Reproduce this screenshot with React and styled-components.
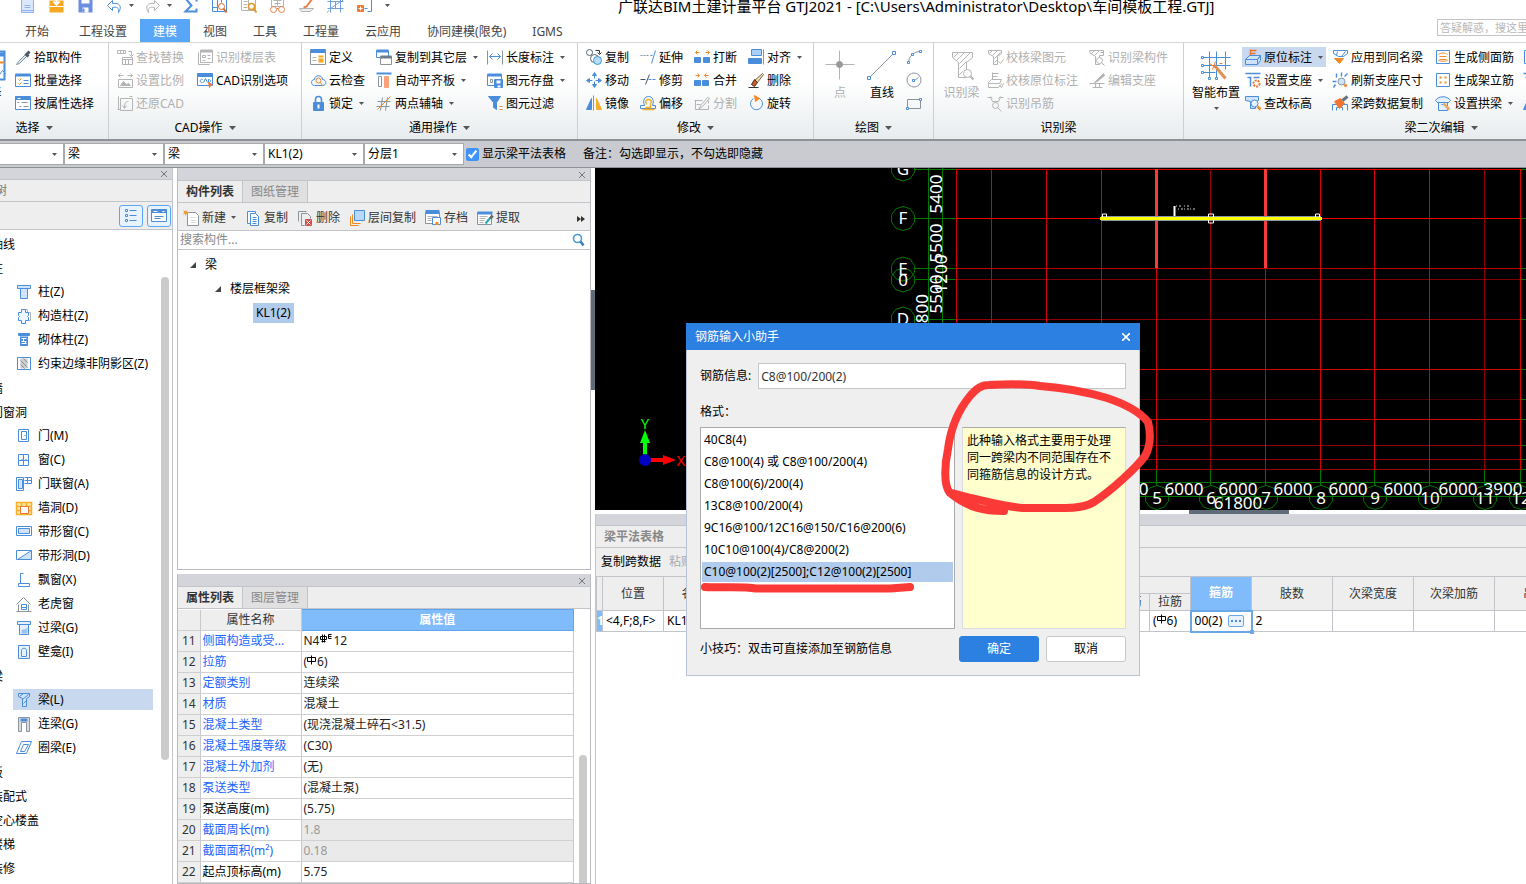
import { useState } from 'react'
import styled, { createGlobalStyle } from 'styled-components'

const B = '#4a8edb'
const L = '#cfe3fa'
const O = '#f08a24'
const G = '#8a949e'
const D = '#b4b4b4'

// 16 x 16 icons, stroke is inherited from the svg unless a shape sets its own
const icons = {
  doc: <><path d='M2 0h9l3 3v12H2z' fill='#dbe7fb' stroke='#8fb1ee' /><path d='M5 8h6M5 10h6M2 13h12' stroke='#8fb1ee' /></>,
  open: <><path d='M1 3h14v12H1z' fill='#f7a823' stroke='none' /><path d='M8 1v6M5 4l3 3 3-3' stroke='#fff' strokeWidth='2' /><path d='M1 9h14' stroke='#fff' /></>,
  save: <><path d='M1 1h14v14H1z' fill='#6a8fe0' stroke='none' /><path d='M5 10h6v5H5zM4 1h8v5H4z' fill='#fff' stroke='none' /><path d='M6 11v4' stroke='#6a8fe0' strokeWidth='2' /></>,
  undo: <path d='M6 3L1 8l5 5v-3c4-1 7 0 6 5 4-6 1-10-6-9z' fill='#fff' stroke={B} />,
  redo: <path d='M10 3l5 5-5 5v-3c-4-1-7 0-6 5-4-6-1-10 6-9z' fill='#fff' stroke={D} />,
  sum: <path d='M14 4V1H3l6 7-6 6h11v-3' stroke={B} strokeWidth='2' />,
  gridFind: <><path d='M1 1h14v13H1zM1 10h5v4M6 1v9M10 1v4' fill='#fff' stroke={B} /><circle cx='10' cy='9' r='3' fill='#fff' stroke='#e0662a' /><path d='M12 11l3 4' stroke='#e0662a' strokeWidth='2' /></>,
  sheetFind: <><path d='M1 0h14v13H1zM3 4h4M3 7h4M3 10h4M8 0v13' fill='#fff' stroke={D} /><circle cx='11' cy='9' r='3' fill='#fff' stroke='#e09a2a' strokeWidth='1.5' /><path d='M13 11l3 4' stroke='#e09a2a' strokeWidth='2' /></>,
  glasses: <><path d='M2 0h12v9H2zM4 3h8M8 0v8M5 6h6' stroke={D} /><circle cx='4' cy='12' r='3' stroke='#ee7f4c' /><circle cx='12' cy='12' r='3' stroke='#ee7f4c' /><path d='M7 11h2' stroke='#ee7f4c' /></>,
  brush: <><path d='M1 11h14l-3 3H3z' fill='#eee' stroke={D} /><path d='M14 1L8 9l-3 1' stroke='#ee7f4c' strokeWidth='2' /></>,
  grid3: <path d='M3 0v15M13 0v15M0 4h16M0 11h16M8 4v7M3 11l10-7M1 13l-1 2M16 2l-2 2' stroke='#6f9fe0' />,
  addView: <><path d='M3 0h3M11 2h4v12h-4M8 11h3' stroke={B} /><path d='M1 8h6v6H1z' fill='#f07a30' stroke='#f07a30' /><path d='M4 9v4M2 11h4' stroke='#fff' /></>,
  picker: <><path d='M10 5L3 12l-2 3 3-1 7-7z' fill='#cfe9f7' stroke={G} /><path d='M10 4l3 3M12 4l2-2' stroke='#4b5a6a' strokeWidth='3' /></>,
  batch: <><path d='M0 2h15v12H0z' fill='#fff' /><path d='M0 2.500h15' strokeWidth='3' /><path d='M3 7l1 1 2-2M3 11l1 1 2-2' stroke={O} /><path d='M8 8h5M8 11h5' /></>,
  props: <><path d='M0 1h15v13H0z' fill='#fff' /><path d='M0 2.500h15' strokeWidth='4' /><path d='M2 7h2M6 7h6M4 11h2M8 11h5' stroke={G} /><path d='M2 3h3' stroke='#fff' /></>,
  replace: <><path d='M0 1h8v3H0zM3 1v3M6 1v3M11 2h3v4M12 5l2 2 2-2M5 8h10v7H5zM5 10h10M8 10v5M11 10v5' /></>,
  ratio: <><path d='M1 3h5M10 3h5M3 1L1 3l2 2M13 1l2 2-2 2M1 7h14v8H1z' /><path d='M3 13l3-4 3 3 2-1 2 2z' fill={D} /></>,
  restore: <path d='M3 3h12v12H3zM1 1v13M0 14h3M12 1h3M11 6c-3 0-4 2-4 6M5 10l2 3 2-3' />,
  floorTable: <><path d='M3 1h12v12H3zM1 3v12h11' /><path d='M3 1.500h12' strokeWidth='3' /><path d='M5 6h3v2H5zM10 6h3M10 9h3M5 11h3' /></>,
  cad: <><path d='M0 1h15v12H0z' fill='#fff' /><path d='M0 2.500h15' strokeWidth='4' /><path d='M5 7c-3-1-3 4 0 3M6 10l2-4 2 4M11 7v3c3 0 3-3 0-3' /><path d='M11 10l4 2-2 1-1 2z' fill='#f07a4a' stroke='#f07a4a' /></>,
  define: <><path d='M0 0h15v15H0z' fill='#fff' stroke={G} /><path d='M0 1.500h15' strokeWidth='4' /><path d='M2 8h4M2 11h4' stroke={D} /><path d='M8 7h5M8 10h5M8 12h5' stroke='#f5a623' strokeWidth='2' /></>,
  cloud: <><path d='M4 13C0 13 0 7 4 7c0-5 8-5 8 0 4 0 5 6 0 6z' fill='#eef6ff' /><circle cx='8' cy='8' r='2.500' stroke={O} /><path d='M10 10l2 3' stroke={O} /></>,
  lock: <><path d='M5 7V4c0-4 6-4 6 0v3' strokeWidth='1.600' /><path d='M3 7h10v8H3z' fill={B} /><path d='M8 9v4' stroke='#fff' strokeWidth='2' /></>,
  copyFloor: <><path d='M0 1h12v7H0z' fill='#fff' /><path d='M0 1.500h12' strokeWidth='3' /><path d='M4 7h11v8H4z' fill='#fff' stroke={G} /><path d='M4 7.500h11' strokeWidth='3' stroke='#6b7c8d' /></>,
  align: <><path d='M0 1h15' strokeWidth='2' /><path d='M2 4h3v10H2z' stroke={G} /><path d='M8 4h4v11H8z' fill='#f9a27a' stroke='#f9a27a' /></>,
  axis: <><path d='M6 2L4 15M11 2L9 15M1 6h13M0 11h13' stroke={G} /><path d='M14 1L1 14' stroke={O} /></>,
  length: <><path d='M0 1v14M15 1v14' stroke={G} /><path d='M2 7h11M5 4L2 7l3 3M10 4l3 3-3 3' /></>,
  store: <><path d='M0 2h14v11H0z' fill='#fff' /><path d='M0 2.500h14' strokeWidth='3' /><path d='M3 7h2v3H3z' stroke={G} /><path d='M7 7h8v8H7z' fill={B} /><path d='M9 8h4v3H9z' fill='#fff' stroke='none' /><path d='M10 14h3' stroke='#fff' strokeWidth='2' /></>,
  funnel: <><path d='M1 1h12L9 7v7l-3-2V7z' fill={B} /><path d='M12 11h3M12 14h3' stroke={O} /></>,
  copyC: <><circle cx='3' cy='3' r='3' stroke='#5a6570' /><circle cx='8' cy='9' r='4' fill='#fff' stroke='#5a6570' /><circle cx='11' cy='11' r='4' fill='#b9dbf5' stroke='#3a9bd8' /><path d='M9 1h4v3M11 3l2 2 2-2' stroke='#333' /></>,
  move: <path d='M8 0l2 3H6zM8 15l2-3H6zM0 8l3-2v4zM15 8l-3-2v4zM8 3v3M8 9v3M3 8h3M9 8h3' fill={B} />,
  mirror: <><path d='M5 3v11H0z' fill={B} /><path d='M7 0v15' stroke={G} /><path d='M10 3v11h5z' fill='#f5b027' stroke='#f5b027' /></>,
  extend: <><path d='M0 6h9' strokeDasharray='2 1' stroke={G} /><path d='M10 6h2' /><path d='M15 1l-4 13' /></>,
  trim: <><path d='M0 7h5M5 12L9 2' stroke='#456' /><path d='M8 7h8' strokeDasharray='3 1' /></>,
  offset: <><path d='M0 13v-3h4C2 5 4 1 8 1s6 4 4 9h3v3z' /><path d='M2 14h12M6 9C4 5 6 4 8 4s4 1 2 5v3H5' stroke='#f5b027' strokeWidth='1.500' /></>,
  breakI: <><path d='M0 8h6v5H0zM9 8h6v5H9z' fill={B} /><path d='M1 3h4M3 1L1 3l2 2M11 3h4M13 1l2 2-2 2' stroke={O} /></>,
  merge: <><path d='M0 8h6v5H0zM8 8h6v5H8z' fill={B} /><path d='M1 3h4M3 1l2 2-2 2M10 3h4M12 1l-2 2 2 2' stroke={O} /></>,
  split: <path d='M0 5h8M1 5v9h13v-4M14 5v3M4 14l3-5 6-7 2 1-7 8-4 3zM2 9h4' />,
  alignR: <><path d='M3 0h10v6H3z' fill='#a9d0fb' /><path d='M0 9h13v5H0z' fill={B} /><path d='M15 0v15' stroke={G} /></>,
  erase: <><path d='M14 1l1 1-6 8-3-2z' fill='#f2d9a8' stroke='#7a6a50' /><path d='M6 7l3 3-3 4-3-2z' fill='#d9541e' stroke='#333' /><path d='M0 15h10' stroke='#333' /></>,
  rotate: <><path d='M5 3a6 6 0 1 0 6 0' /><path d='M6 0l5 3-4 3z' fill={O} stroke={O} /></>,
  arc: <><path d='M2 14C2 7 7 2 14 2' stroke={G} /><path d='M1 12h2v2H1zM13 1h2v2h-2zM5 4h2v2H5z' fill='#fff' /></>,
  circle: <><circle cx='7.500' cy='7.500' r='7' stroke={G} /><path d='M8 8l4-3' stroke={G} /><path d='M6 7h2v2H6z' fill='#fff' /></>,
  rect: <><path d='M1 4h13v9H1z' stroke={G} /><path d='M0 12h2v2H0zM13 3h2v2h-2z' fill='#fff' /></>,
  beamChk: <path d='M1 1h13v3l-4 3v8H6V7L1 4zM2 4l3-3M5 6l5-5M7 9l6-6M7 13l3-3M11 12l2 2 3-4' />,
  stampChk: <path d='M5 0v7M5 1h6M5 4h5M1 10l3-3h10l-2 4H1zM1 11v4h10l3-4M12 13l2 2 2-4' />,
  hang: <><path d='M0 2h3l2 4h6l2-4h3M3 1l2 2M13 1l-2 2' /><circle cx='8' cy='10' r='3' /><path d='M10 12l4 4' /></>,
  beamPart: <><path d='M0 1h14v5h-4v9H6V7L1 4zM2 4l3-3M5 6l5-5M11 3h3' /><circle cx='10' cy='11' r='3' fill='#fff' /><path d='M12 13l3 3' /></>,
  editSup: <><path d='M0 11h15M3 15h10M6 11v4M10 11v4' /><path d='M14 1L7 8l-2 2 3-1 7-6z' fill={D} /></>,
  origin: <><path d='M5 0v8M5 1h6M5 4h5' stroke='#e8742e' strokeWidth='1.500' /><path d='M0 10l4-4h11l-3 4zM0 10h12v5H0zM12 10l3-4v5l-3 4' fill={L} /></>,
  setSup: <><path d='M0 1h15M2 5h4M5 5v9M8 5h6' strokeWidth='1.500' /><circle cx='11' cy='11' r='3' stroke='#ee7430' strokeWidth='2' strokeDasharray='2 1' /></>,
  elev: <><path d='M0 1h13v4l-3 2v6H5V6L0 5z' fill={L} /><circle cx='9' cy='8' r='3.500' fill='#e8f3ff' /><path d='M12 11l3 3' stroke={O} strokeWidth='2.500' /></>,
  apply: <><path d='M1 1h14v3l-4 3H6L1 4zM5 2l-1 4M9 7l4-5' fill='#fff' /><path d='M2 9h9l-4 5z' fill='#ee8a2e' stroke='#ee8a2e' /></>,
  refresh: <><path d='M0 9h4M4 5V1M9 0v4M12 4l3-3M3 12l-2 3' strokeWidth='1.400' /><circle cx='9' cy='9' r='3.500' fill={L} stroke={G} /><path d='M12 12l2 2' stroke={O} strokeWidth='3' /></>,
  spanCopy: <><path d='M0 15V9h15v6M4 15v-3h6v3' /><path d='M2 6l6-3 4 5-5 5z' fill='#ee7430' stroke='#ee7430' /><path d='M10 5l5-4' stroke='#66727e' strokeWidth='3' /></>,
  side: <><path d='M1 1h13v13H1z' fill='#fff' /><path d='M3 5c2-2 7-2 9 0M4 7h7M3 11c2 1 7 1 9 0M4 10h7' stroke={O} /></>,
  erect: <><path d='M1 1h13v13H1z' fill='#fff' /><path d='M5 4v2M10 4v2M5 9v2M10 9v2' stroke={O} strokeWidth='2' /></>,
  arch: <><path d='M0 5c3-5 12-5 15 0l-2 2H2zM3 7v8h9V7M2 7h11M6 9h4' fill='#e5f0ff' /><path d='M8 8l6 6' stroke='#e8a868' strokeWidth='2.500' /></>,
  newI: <><path d='M4 2h8l3 3v10H4z' fill='#fff' stroke={G} /><path d='M7 7h6M7 10h6M7 12h6' stroke='#ddd' /><path d='M0 2h5M2 0v5M0 0l4 4M4 0L0 4' stroke='#f0a030' /></>,
  copy: <><path d='M2 1h8v12H2z' fill='#fff' /><path d='M5 3h5l3 3v9H5z' fill='#fff' /><path d='M7 7h4M7 9h4M7 11h4M7 13h4' /></>,
  del: <><path d='M1 11V1h8M4 3h6l3 3v2M4 3v12h3' stroke={G} /><path d='M8 9h6v6H8z' fill='#d05050' stroke='#d05050' /><path d='M9 10l4 4M13 10l-4 4' stroke='#fff' /></>,
  layer: <><path d='M5 0h10v10H5z' fill='#b9d8fd' /><path d='M3 4v9h8M1 6v9h8' stroke={O} /></>,
  archive: <><path d='M0 2h14v11H0z' fill='#fff' stroke={G} /><path d='M0 1.500h14' strokeWidth='4' /><path d='M2 6h10M2 8h4M2 10h4' stroke={D} /><path d='M7 7h8v7H7z' fill='#fff' /><path d='M10 13h3' stroke={O} strokeWidth='3' /></>,
  extract: <><path d='M0 2h14v12H0z' fill='#fff' stroke={G} /><path d='M0 2.500h15' strokeWidth='3' /><path d='M2 6h8M2 8h6M2 10h5M2 12h4' stroke={D} /><path d='M13 7l-5 6' stroke='#2ab' strokeWidth='2' /><path d='M15 5l-2 3' stroke='#666' strokeWidth='3' /></>,
  column: <path d='M1 1h13v3H1zM4 4v10h7V4' fill={L} />,
  gzColumn: <><path d='M6 1h5v3h3v8h-3' stroke={D} /><path d='M5 1h4v3h3v3l-1 1 1 1v3H9v3H5v-3H2V9l1-1-1-1V4h3z' fill='#eef6ff' /></>,
  brick: <><path d='M2 1h11v2H2zM4 4v9h7V4' fill={B} /><path d='M5 6h5M5 9h5M5 11h5M7 6v3M9 9v2' stroke='#fff' /></>,
  hatch: <><path d='M1 1h13v12H1z' fill='#fff' /><path d='M4 2h7v10H4z' fill='#ccc' stroke='none' /><path d='M4 4l7 7M4 8l4 4M7 2l4 4' stroke={G} /></>,
  door: <path d='M2 1h10v12H2zM5 3h5v8H5zM8 7h1' fill='#fff' />,
  windowI: <path d='M2 2h10v11H2zM7 2v11M2 8h10M5 7h1M9 7h1' fill='#fff' />,
  doorWin: <><path d='M0 1h7v13H0z' fill='#fff' /><path d='M2 3h4v9H2z' fill={L} /><path d='M8 1h7v6H8M11 1v6M8 4h7' /></>,
  hole: <><path d='M0 2h15v12H0zM0 6h15M0 10h15M5 2v4M10 2v4' fill='#ffe8a8' stroke='#f5b027' strokeWidth='1.500' /><path d='M4 6h8v7H4z' fill='#fff' stroke='#ee7430' /></>,
  stripWin: <><path d='M0 2h15v9H0z' fill='#fff' /><path d='M2 4h11v5H2z' fill={L} /></>,
  stripHole: <><path d='M0 2h15v9H0z' fill='#fff' /><path d='M15 2v9H1z' fill={L} /></>,
  bay: <path d='M7 1H4v10M2 11h11v3H2z' fill='#fff' />,
  dormer: <><path d='M0 8l7-7 7 7M2 8v7M12 8v7M0 15h15' stroke={G} /><path d='M5 8h5v5H5zM5 11h5' /></>,
  lintel: <><path d='M1 1h13v3H1zM3 4v10h9V4' fill='#e8f2ff' /><path d='M5 13V9h3l3-2v6z' fill='#9cc3f0' stroke='none' /></>,
  niche: <path d='M2 1h11v13H2zM5 12V6c0-3 5-3 5 0v6z' fill='#e8f2ff' />,
  beam: <path d='M2 1h11v3l-3 2v8H6V6L2 4zM3 4l4-3M6 7l6-5M7 11l3-3' fill={L} />,
  linkBeam: <><path d='M2 1h11v14h-3V6H5v9H2z' fill='#ddd' stroke={G} /><path d='M4 3.500h7' strokeWidth='3' /></>,
  ringBeam: <path d='M5 1h10l-5 12H0zM7 4h5l-4 7H4z' fill='#fff' />,
  find: <><circle cx='7' cy='6' r='4' strokeWidth='1.600' stroke='#4a9bd0' /><path d='M10 9l3 4' strokeWidth='2.500' stroke='#3a80b8' /></>
}

const Svg = styled.svg`
  flex: none;
  display: block;
  overflow: visible;
  fill: none;
  stroke: ${p => p.$stroke || B};
`

// half pixel shift in the viewBox keeps the 1px strokes sharp
const Icon = ({ name, off }) => (
  <Svg width='16' height='16' viewBox='-0.5 -0.5 16 16' $stroke={off ? D : B} aria-hidden='true'>
    {icons[name]}
  </Svg>
)

const CaretSvg = styled.svg`
  flex: none;
  fill: #555;
  margin-left: ${p => p.$gap ?? 4}px;
`

const Caret = ({ gap, wide }) => (
  <CaretSvg $gap={gap} width={wide ? 7 : 5} height={wide ? 4 : 3} viewBox='0 0 6 3' preserveAspectRatio='none' aria-hidden='true'>
    <path d='M0 0h6L3 3z' />
  </CaretSvg>
)

const BigSvg = ({ children, off }) => (
  <Svg width='30' height='30' viewBox='-0.5 -0.5 30 30' $stroke={off ? D : B} aria-hidden='true'>
    {children}
  </Svg>
)

const quickIcons = [
  'doc', 'open', 'save', 'undo', '', 'redo', '', 'sum', 'gridFind',
  'sheetFind', 'glasses', 'brush', 'grid3', 'addView'
]

const menuTabs = [
  '开始', '工程设置', '建模', '视图', '工具', '工程量', '云应用', '协同建模(限免)', 'IGMS'
]

const treeRows = [
  ['轴线'], ['柱'],
  ['柱(Z)', 'column'], ['构造柱(Z)', 'gzColumn'], ['砌体柱(Z)', 'brick'], ['约束边缘非阴影区(Z)', 'hatch'],
  ['墙'], ['门窗洞'],
  ['门(M)', 'door'], ['窗(C)', 'windowI'], ['门联窗(A)', 'doorWin'], ['墙洞(D)', 'hole'],
  ['带形窗(C)', 'stripWin'], ['带形洞(D)', 'stripHole'], ['飘窗(X)', 'bay'], ['老虎窗', 'dormer'],
  ['过梁(G)', 'lintel'], ['壁龛(I)', 'niche'],
  ['梁'],
  ['梁(L)', 'beam'], ['连梁(G)', 'linkBeam'], ['圈梁(E)', 'ringBeam'],
  ['板'], ['装配式'], ['空心楼盖'], ['楼梯'], ['装修']
]

const Rebar = ({ seismic }) => (
  <RebarSvg width={seismic ? 14 : 10} height='12' viewBox={seismic ? '-0.5 0.5 14 12' : '-0.5 0.5 10 12'} role='img' aria-label='钢筋'>
    {seismic ? (
      <path d='M1 3h6v3H1zM3 1v8M5 1v8M2 8h4M9 1v4M9 1h3M9 3h3M9 5h3' />
    ) : (
      <path d='M0 3h8v4H0zM4 1v9' />
    )}
  </RebarSvg>
)

const properties = [
  ['侧面构造或受...', <>N4<Rebar seismic />12</>],
  ['拉筋', <>(<Rebar />6)</>],
  ['定额类别', '连续梁'],
  ['材质', '混凝土'],
  ['混凝土类型', '(现浇混凝土碎石<31.5)'],
  ['混凝土强度等级', '(C30)'],
  ['混凝土外加剂', '(无)'],
  ['泵送类型', '(混凝土泵)'],
  ['泵送高度(m)', '(5.75)', 'plain'],
  ['截面周长(m)', '1.8', 'locked'],
  ['截面面积(m²)', '0.18', 'locked'],
  ['起点顶标高(m)', '5.75', 'plain'],
  ['终点顶标高(m)', '5.75', 'plain']
]

const formats = [
  '40C8(4)',
  'C8@100(4) 或 C8@100/200(4)',
  'C8@100(6)/200(4)',
  '13C8@100/200(4)',
  '9C16@100/12C16@150/C16@200(6)',
  '10C10@100(4)/C8@200(2)',
  'C10@100(2)[2500];C12@100(2)[2500]'
]

const Tool = ({ icon, label, off, caret, active }) => (
  <ToolButton type='button' disabled={off} $active={active} aria-label={label || icon}>
    <Icon name={icon} off={off} />
    {label && <span>{label}</span>}
    {caret && <Caret gap={3} />}
  </ToolButton>
)

const Group = ({ label, width, indent, noCaret, children }) => (
  <RibbonGroup $width={width}>
    <GroupBody $indent={indent}>{children}</GroupBody>
    <GroupLabel>
      {label}
      {!noCaret && <Caret wide gap={6} />}
    </GroupLabel>
  </RibbonGroup>
)

const Ribbon = () => (
  <RibbonBar>
    <Group label='选择' width={149} indent={7}>
      <BigTool type='button' $width={45}>
        <BigSvg><path d='M1 1h28v28H1z' fill='#fff' strokeWidth='2' /><path d='M1 4h28' strokeWidth='4' /><path d='M18 12h11' stroke={O} strokeWidth='2' /><path d='M22 27l5-7 3 3' /></BigSvg>
        <span>选择</span>
      </BigTool>
      <ToolColumn $width={90}>
        <Tool icon='picker' label='拾取构件' />
        <Tool icon='batch' label='批量选择' />
        <Tool icon='props' label='按属性选择' />
      </ToolColumn>
    </Group>
    <Group label='CAD操作' width={193} indent={5}>
      <ToolColumn $width={80}>
        <Tool icon='replace' label='查找替换' off />
        <Tool icon='ratio' label='设置比例' off />
        <Tool icon='restore' label='还原CAD' off />
      </ToolColumn>
      <ToolColumn $width={104}>
        <Tool icon='floorTable' label='识别楼层表' off />
        <Tool icon='cad' label='CAD识别选项' />
      </ToolColumn>
    </Group>
    <Group label='通用操作' width={276} indent={5}>
      <ToolColumn $width={66}>
        <Tool icon='define' label='定义' />
        <Tool icon='cloud' label='云检查' />
        <Tool icon='lock' label='锁定' caret />
      </ToolColumn>
      <ToolColumn $width={111}>
        <Tool icon='copyFloor' label='复制到其它层' caret />
        <Tool icon='align' label='自动平齐板' caret />
        <Tool icon='axis' label='两点辅轴' caret />
      </ToolColumn>
      <ToolColumn $width={90}>
        <Tool icon='length' label='长度标注' caret />
        <Tool icon='store' label='图元存盘' caret />
        <Tool icon='funnel' label='图元过滤' />
      </ToolColumn>
    </Group>
    <Group label='修改' width={236} indent={5}>
      <ToolColumn $width={54}>
        <Tool icon='copyC' label='复制' />
        <Tool icon='move' label='移动' />
        <Tool icon='mirror' label='镜像' />
      </ToolColumn>
      <ToolColumn $width={54}>
        <Tool icon='extend' label='延伸' />
        <Tool icon='trim' label='修剪' />
        <Tool icon='offset' label='偏移' />
      </ToolColumn>
      <ToolColumn $width={54}>
        <Tool icon='breakI' label='打断' />
        <Tool icon='merge' label='合并' />
        <Tool icon='split' label='分割' off />
      </ToolColumn>
      <ToolColumn $width={60}>
        <Tool icon='alignR' label='对齐' caret />
        <Tool icon='erase' label='删除' />
        <Tool icon='rotate' label='旋转' />
      </ToolColumn>
    </Group>
    <Group label='绘图' width={120} indent={5}>
      <BigTool type='button' $width={42} disabled>
        <BigSvg off><path d='M14 0v29M0 14h29' /><circle cx='14' cy='14' r='3' fill='#999' stroke='#999' /></BigSvg>
        <span>点</span>
      </BigTool>
      <BigTool type='button' $width={42}>
        <BigSvg><path d='M2 27L27 2' stroke={G} /><path d='M0 26h3v3H0zM25 1h3v3h-3z' fill='#fff' /></BigSvg>
        <span>直线</span>
      </BigTool>
      <ToolColumn $width={22}>
        <Tool icon='arc' />
        <Tool icon='circle' />
        <Tool icon='rect' />
      </ToolColumn>
    </Group>
    <Group label='识别梁' width={250} indent={5} noCaret>
      <BigTool type='button' $width={45} disabled>
        <BigSvg off><path d='M5 2h20v5l-6 5v15h-8V12L5 7zM6 7l5-5M9 10l8-8M12 13L23 2M12 18l7-7M12 24l3-3' /><circle cx='20' cy='23' r='4' fill='#fff' /><path d='M23 26l3 3' strokeWidth='2' /></BigSvg>
        <span>识别梁</span>
      </BigTool>
      <ToolColumn $width={102}>
        <Tool icon='beamChk' label='校核梁图元' off />
        <Tool icon='stampChk' label='校核原位标注' off />
        <Tool icon='hang' label='识别吊筋' off />
      </ToolColumn>
      <ToolColumn $width={92}>
        <Tool icon='beamPart' label='识别梁构件' off />
        <Tool icon='editSup' label='编辑支座' off />
      </ToolColumn>
    </Group>
    <Group label='梁二次编辑' width={515} indent={6}>
      <BigTool type='button' $width={52}>
        <BigSvg><path d='M8 1v26M15 1v26M24 1v18M1 7h28M1 15h28M1 22h13' /><path d='M0 6h2v2H0zM0 14h2v2H0zM0 21h2v2H0zM7 27h2v2H7zM14 27h2v2h-2z' fill='#fff' /><path d='M13 15l11 13' stroke='#e09050' strokeWidth='3' /><path d='M8 13l6 4M14 11l-3 8M18 13l3 0' stroke='#f07a30' /></BigSvg>
        <span>智能布置</span>
        <Caret gap={0} />
      </BigTool>
      <ToolColumn $width={87}>
        <Tool icon='origin' label='原位标注' caret active />
        <Tool icon='setSup' label='设置支座' caret />
        <Tool icon='elev' label='查改标高' />
      </ToolColumn>
      <ToolColumn $width={103}>
        <Tool icon='apply' label='应用到同名梁' />
        <Tool icon='refresh' label='刷新支座尺寸' />
        <Tool icon='spanCopy' label='梁跨数据复制' />
      </ToolColumn>
      <ToolColumn $width={88}>
        <Tool icon='side' label='生成侧面筋' />
        <Tool icon='erect' label='生成架立筋' />
        <Tool icon='arch' label='设置拱梁' caret />
      </ToolColumn>
      <ToolColumn $width={22}>
        <Tool icon='side' />
        <Tool icon='setSup' />
        <Tool icon='mirror' />
      </ToolColumn>
    </Group>
  </RibbonBar>
)

const Combo = ({ name, value }) => (
  <ComboBox>
    <select aria-label={name} defaultValue={value}>
      <option>{value}</option>
    </select>
    <Caret gap={0} />
  </ComboBox>
)

const axisX = [957, 992, 1047, 1102, 1157, 1211, 1266, 1321, 1375, 1430, 1485, 1521]
const axisY = [
  [169, '#e00000'], [218, '#f00000'], [268, '#c00000'], [279, '#800000'], [319, '#900000'],
  [369, '#d00000'], [399, '#500000'], [419, '#d00000'], [445, '#900000'], [459, '#900000'], [469, '#a00000']
]

const ring = (cx, cy) =>
  Array.from({ length: 10 }, (_, i) => {
    const a = (i * Math.PI) / 5 + Math.PI / 10
    return `${(cx + 12 * Math.cos(a)).toFixed(1)},${(cy + 12 * Math.sin(a)).toFixed(1)}`
  }).join(' ')

const Drawing = () => (
  <DrawingSvg viewBox='595 168 931 342' preserveAspectRatio='xMinYMin slice'>
    <g stroke='#007800' fill='none'>
      <path d='M928.500 168v342M942.500 168v342M956 482.500h570M956 496.500h570' />
      {axisY.map(([y]) => <path key={y} d={`M942 ${y + 0.5}h14M1521 ${y + 0.5}h5`} />)}
      {[169, 218, 268, 279, 319].map(y => <path key={y} d={`M915 ${y + 0.5}h28`} />)}
      {axisX.map(x => <path key={x} d={`M${x - 0.5} 469v17`} />)}
    </g>
    <g>
      {axisY.map(([y, c]) => <path key={y} d={`M956 ${y + 0.5}h565`} stroke={c} />)}
      {axisX.map((x, i) => (
        <path key={x} d={`M${x - 0.5} 169v300`} stroke={i === 5 || i === 10 ? '#900000' : '#d80000'} />
      ))}
    </g>
    <g fill='none' stroke='#007800'>
      {[169, 218.5, 269, 280, 319].map(y => <polygon key={y} points={ring(903, y)} />)}
      {axisX.slice(4).map(x => <polygon key={x} points={ring(x, 497.5)} />)}
    </g>
    <g fill='#fff' fontSize='17' textAnchor='middle'>
      {[['G', 169], ['F', 218], ['E', 269], ['0', 280], ['D', 319]].map(([t, y]) => (
        <text key={t} x='903' y={y + 6}>{t}</text>
      ))}
      {['5', '6', '7', '8', '9', '10', '11', '12'].map((t, i) => (
        <text key={t} x={axisX[i + 4]} y='504'>{t}</text>
      ))}
      {[1129, 1184, 1238, 1293, 1348, 1403, 1458].map(x => <text key={x} x={x} y='495'>6000</text>)}
      <text x='1503' y='495'>3900</text>
      <text x='1238' y='509'>61800</text>
      <text transform='translate(942 194) rotate(-90)'>5400</text>
      <text transform='translate(942 243) rotate(-90)'>5500</text>
      <text transform='translate(947 274) rotate(-90)'>1200</text>
      <text transform='translate(942 294) rotate(-90)'>5500</text>
      <text transform='translate(928 294) rotate(-90)' textAnchor='end'>61800</text>
    </g>
    <path d='M1156.500 169v99M1265.500 169v99' stroke='#f83c3c' strokeWidth='3' />
    <path d='M1101 218.500h220' stroke='#8894a8' strokeWidth='5' />
    <path d='M1100 218.500h222' stroke='#ffff00' strokeWidth='3' />
    <path d='M1102.500 217v-3h4v3M1315.500 217v-3h4v3M1208.500 217v-3h5v3M1208.500 220v3h5v-3' stroke='#fff' fill='none' />
    <path d='M1174.500 206v10' stroke='#fff' strokeWidth='2' />
    <path d='M1176 206h6M1178 209h17M1184 206h5' stroke='#ccc' strokeDasharray='1 2 2 1' />
    <path d='M645 455v-12' stroke='#00ff00' strokeWidth='4' />
    <path d='M645 430l5 13h-10z' fill='#00ff00' />
    <path d='M650 460h13' stroke='#ff0000' strokeWidth='4' />
    <path d='M676 460l-13-5v10z' fill='#ff0000' />
    <circle cx='645' cy='460' r='6' fill='#0000c0' />
    <g fontSize='15' textAnchor='middle'>
      <text x='645' y='429' fill='#00ff00'>Y</text>
      <text x='681' y='466' fill='#ff0000'>X</text>
    </g>
  </DrawingSvg>
)

const RebarDialog = () => {
  const [selected, setSelected] = useState(6)

  return (
    <Dialog role='dialog' aria-labelledby='rebar-title'>
      <DialogTitle>
        <span id='rebar-title'>钢筋输入小助手</span>
        <button type='button' aria-label='关闭'>
          <svg width='8' height='8' viewBox='0 0 8 8'><path d='M0 0l8 8M8 0L0 8' stroke='#fff' strokeWidth='1.600' /></svg>
        </button>
      </DialogTitle>
      <DialogBody>
        <Field>
          <label htmlFor='rebar'>钢筋信息:</label>
          <input id='rebar' defaultValue='C8@100/200(2)' />
        </Field>
        <FormatLabel id='format-label'>格式：</FormatLabel>
        <Formats>
          <FormatList role='listbox' aria-labelledby='format-label'>
            {formats.map((f, i) => (
              <FormatItem key={f} role='option' aria-selected={i === selected} $selected={i === selected} onClick={() => setSelected(i)}>
                {f}
              </FormatItem>
            ))}
          </FormatList>
          <Note>此种输入格式主要用于处理同一跨梁内不同范围存在不同箍筋信息的设计方式。</Note>
        </Formats>
        <DialogFooter>
          <span>小技巧：双击可直接添加至钢筋信息</span>
          <DialogButton type='button' $primary>确定</DialogButton>
          <DialogButton type='button'>取消</DialogButton>
        </DialogFooter>
      </DialogBody>
      <Markup width='454' height='353' aria-hidden='true'>
        <g transform='translate(-686 -323)'>
          <path d='M1004 511C985 511 968 508 950 493C943 485 945 463 948 449C951 426 960 408 970 396C976 389 981 385 989 385C1010 384 1028 384 1040 386C1068 388 1090 393 1107 398C1125 404 1140 412 1148 422C1151 434 1150 447 1145 456C1136 468 1112 490 1094 502C1086 507 1078 508 1066 508H1023C1007 507 988 502 971 498L952 493' />
          <path d='M705 587C720 588 742 586 756 588.500H890L910 587' />
        </g>
      </Markup>
    </Dialog>
  )
}

const App = () => {
  const [checked, setChecked] = useState(true)

  return (
    <Page>
      <GlobalStyle />
      <TitleBar>
        <QuickBar>
          {quickIcons.map((n, i) =>
            n ? <Icon key={i} name={n} /> : <CaretSlot key={i}><Caret gap={0} /></CaretSlot>
          )}
          <Caret gap={0} />
        </QuickBar>
        <h1>广联达BIM土建计量平台 GTJ2021 - [C:\Users\Administrator\Desktop\车间模板工程.GTJ]</h1>
      </TitleBar>
      <MenuTabs>
        {menuTabs.map(t => <MenuTab key={t} type='button' $active={t === '建模'}>{t}</MenuTab>)}
        <HelpSearch aria-label='搜索' placeholder='答疑解惑，搜这里' />
      </MenuTabs>
      <Ribbon />
      <ContextBar>
        <Combo name='楼层' value='' />
        <Combo name='类别' value='梁' />
        <Combo name='类型' value='梁' />
        <Combo name='构件' value='KL1(2)' />
        <Combo name='分层' value='分层1' />
        <CheckLabel>
          <input type='checkbox' checked={checked} onChange={e => setChecked(e.target.checked)} />
          显示梁平法表格
        </CheckLabel>
        <span>备注：勾选即显示，不勾选即隐藏</span>
      </ContextBar>
      <Workspace>
        <NavPanel>
          <PanelGrip><CloseMark /></PanelGrip>
          <NavTitle>树</NavTitle>
          <NavTools>
            <ViewButton type='button' aria-label='列表视图'>
              <Svg width='16' height='16' viewBox='-0.5 -0.5 16 16'><path d='M2 1h2v2H2zM2 6h2v2H2zM2 11h2v2H2zM6 2h7M6 7h7M6 12h7' /></Svg>
            </ViewButton>
            <ViewButton type='button' aria-label='面板视图'>
              <Svg width='16' height='16' viewBox='-0.5 -0.5 16 16'><path d='M0 1h15v12H0z' fill='#fff' /><path d='M0 2.500h15' strokeWidth='4' /><path d='M2 3h4M11 3h2' stroke='#fff' /><path d='M3 8h9M3 10h6' /></Svg>
            </ViewButton>
          </NavTools>
          <NavTree>
            {treeRows.map(([label, icon]) =>
              icon ? (
                <NavItem key={label} $selected={label === '梁(L)'}>
                  <Icon name={icon} />
                  {label}
                </NavItem>
              ) : (
                <NavCategory key={label}>{label}</NavCategory>
              )
            )}
            <ScrollThumb $top={47} $height={483} />
          </NavTree>
        </NavPanel>
        <MiddleColumn>
          <Panel $grow>
            <PanelGrip><CloseMark /></PanelGrip>
            <PanelTabs>
              <PanelTab type='button' $active>构件列表</PanelTab>
              <PanelTab type='button'>图纸管理</PanelTab>
            </PanelTabs>
            <PanelTools>
              <PanelTool type='button'><Icon name='newI' />新建<Caret gap={2} /></PanelTool>
              <PanelTool type='button'><Icon name='copy' />复制</PanelTool>
              <PanelTool type='button'><Icon name='del' />删除</PanelTool>
              <PanelTool type='button'><Icon name='layer' />层间复制</PanelTool>
              <PanelTool type='button'><Icon name='archive' />存档</PanelTool>
              <PanelTool type='button'><Icon name='extract' />提取</PanelTool>
              <MoreButton type='button' aria-label='更多'>
                <svg width='8' height='6' viewBox='0 0 8 6'><path d='M0 0l4 3-4 3zM4 0l4 3-4 3z' fill='#333' /></svg>
              </MoreButton>
            </PanelTools>
            <SearchRow>
              <input aria-label='搜索构件' placeholder='搜索构件...' />
              <Icon name='find' />
            </SearchRow>
            <ComponentTree>
              <Node $level={0}><Twisty />梁</Node>
              <Node $level={1}><Twisty />楼层框架梁</Node>
              <Node $level={2}><mark>KL1(2)</mark></Node>
            </ComponentTree>
          </Panel>
          <Panel>
            <PanelGrip><CloseMark /></PanelGrip>
            <PanelTabs>
              <PanelTab type='button' $active>属性列表</PanelTab>
              <PanelTab type='button'>图层管理</PanelTab>
            </PanelTabs>
            <PropertyArea>
              <PropertyTable>
                <colgroup><col width='22' /><col width='101' /><col /></colgroup>
                <thead>
                  <tr><th /><th>属性名称</th><th className='value'>属性值</th></tr>
                </thead>
                <tbody>
                  {properties.map(([name, value, kind], i) => (
                    <PropertyRow key={name} $kind={kind}>
                      <th>{i + 11}</th>
                      <td>{name}</td>
                      <td>{value}</td>
                    </PropertyRow>
                  ))}
                </tbody>
              </PropertyTable>
              <ScrollThumb $top={146} $height={200} />
            </PropertyArea>
          </Panel>
        </MiddleColumn>
        <Splitter><i /></Splitter>
        <RightColumn>
          <Drawing />
          <BottomSplitter><i /></BottomSplitter>
          <SpanPanel>
            <PanelGrip />
            <SpanTitle>梁平法表格</SpanTitle>
            <SpanTools>
              <button type='button'>复制跨数据</button>
              <button type='button' disabled>粘贴跨数据</button>
            </SpanTools>
            <SpanTable>
              <colgroup>
                {[6, 61, 60, 60, 60, 72, 72, 62, 100, 41, 61, 81, 81, 81, 81].map((w, i) => <col key={i} width={w} />)}
              </colgroup>
              <thead>
                <tr>
                  <th rowSpan='2' />
                  <th rowSpan='2'>位置</th>
                  <th rowSpan='2'>名称</th>
                  <th rowSpan='2'>跨号</th>
                  <th rowSpan='2'>标高</th>
                  <th rowSpan='2'>截面</th>
                  <th rowSpan='2'>跨长</th>
                  <th colSpan='3'>侧面钢筋</th>
                  <th rowSpan='2' className='current'>箍筋</th>
                  <th rowSpan='2'>肢数</th>
                  <th rowSpan='2'>次梁宽度</th>
                  <th rowSpan='2'>次梁加筋</th>
                  <th rowSpan='2'>吊筋</th>
                </tr>
                <tr>
                  <th>通长筋</th>
                  <th>侧面原位标注筋</th>
                  <th>拉筋</th>
                </tr>
              </thead>
              <tbody>
                <tr>
                  <th className='current'>1</th>
                  <td>&lt;4,F;8,F&gt;</td>
                  <td>KL1(2)</td>
                  <td /><td /><td /><td /><td /><td />
                  <td>(<Rebar />6)</td>
                  <ActiveCell>
                    <div>
                      00(2)
                      <button type='button' aria-label='编辑箍筋'>
                        <svg width='10' height='2' viewBox='0 0 10 2'><path d='M0 0h2v2H0zM4 0h2v2H4zM8 0h2v2H8z' fill={B} /></svg>
                      </button>
                    </div>
                  </ActiveCell>
                  <td>2</td>
                  <td /><td /><td />
                </tr>
              </tbody>
            </SpanTable>
          </SpanPanel>
        </RightColumn>
      </Workspace>
      <RebarDialog />
    </Page>
  )
}

const GlobalStyle = createGlobalStyle`
  * {
    box-sizing: border-box;
  }
  body {
    margin: 0;
    overflow: hidden;
  }
  body, button, input, select {
    font-family: 'Noto Sans', 'Noto Sans CJK SC', sans-serif;
    font-size: 12px;
    line-height: 16px;
    color: #000;
  }
  button {
    border: 0;
    padding: 0;
    background: none;
    white-space: nowrap;
  }
  ul {
    margin: 0;
    padding: 0;
    list-style: none;
  }
`

const Page = styled.div`
  position: relative;
  display: flex;
  flex-direction: column;
  height: 100vh;
  overflow: hidden;
  background: #fff;
`

const TitleBar = styled.header`
  display: flex;
  flex: none;
  height: 19px;
  padding-left: 19px;
  h1 {
    margin: 0 0 0 228px;
    font-size: 15px;
    font-weight: 400;
    line-height: 12px;
    white-space: nowrap;
  }
`

const QuickBar = styled.div`
  display: flex;
  align-items: center;
  height: 10px;
  gap: 13px;
`

const CaretSlot = styled.span`
  display: flex;
  width: 8px;
  margin: 0 -6px;
`

const MenuTabs = styled.nav`
  display: flex;
  flex: none;
  height: 24px;
  padding-left: 12px;
  border-bottom: 1px solid #d8d8d8;
`

const MenuTab = styled.button`
  flex: none;
  padding: 2px 13px 0;
  color: ${p => (p.$active ? '#fff' : '#444')};
  background: ${p => (p.$active ? '#58a6f8' : 'none')};
  &:first-child {
    margin-right: 4px;
  }
`

const HelpSearch = styled.input`
  flex: none;
  width: 140px;
  height: 17px;
  margin-left: auto;
  margin-right: -51px;
  padding: 0 2px;
  border: 1px solid #c4c4c4;
  font-size: 11px;
  &::placeholder {
    color: #b8b8b8;
  }
`

const RibbonBar = styled.div`
  display: flex;
  flex: none;
  height: 98px;
  margin-left: -41px;
  border-bottom: 2px solid #8e9298;
  background: linear-gradient(#fff 40%, #e8ecee);
`

const RibbonGroup = styled.section`
  position: relative;
  flex: none;
  width: ${p => p.$width}px;
  border-right: 1px solid #cdcfd2;
  &:first-child {
    padding-left: 1px;
    width: ${p => p.$width + 1}px;
  }
`

const GroupBody = styled.div`
  display: flex;
  height: 72px;
  padding: 4px 0 0 ${p => p.$indent}px;
`

const GroupLabel = styled.div`
  display: flex;
  align-items: center;
  justify-content: center;
  height: 24px;
  padding-top: 2px;
`

const ToolColumn = styled.div`
  display: flex;
  flex: none;
  flex-direction: column;
  align-items: flex-start;
  gap: 3px;
  width: ${p => p.$width}px;
`

const ToolButton = styled.button`
  display: flex;
  align-items: center;
  gap: 3px;
  height: 20px;
  padding: 0 3px;
  background: ${p => (p.$active ? '#c8d8ef' : 'none')};
  span {
    padding-top: 2px;
  }
  &:disabled {
    color: #b0b0b0;
  }
`

const BigTool = styled.button`
  display: flex;
  flex: none;
  flex-direction: column;
  align-items: center;
  width: ${p => p.$width}px;
  height: 66px;
  padding-top: 3px;
  span {
    margin: 5px 0 6px;
  }
  &:disabled {
    color: #b0b0b0;
  }
`

const ContextBar = styled.div`
  display: flex;
  flex: none;
  align-items: center;
  height: 27px;
  margin-left: -36px;
  border-bottom: 1px solid #8e9298;
  background: #c9cbd1;
  white-space: nowrap;
`

const ComboBox = styled.div`
  display: flex;
  align-items: center;
  width: 100px;
  height: 22px;
  padding-right: 6px;
  border: 1px solid #a9a9a9;
  background: #fff;
  select {
    flex: 1;
    min-width: 0;
    padding: 0 3px;
    border: 0;
    appearance: none;
    background: none;
  }
`

const CheckLabel = styled.label`
  display: flex;
  align-items: center;
  gap: 3px;
  margin: 0 17px 0 2px;
  input {
    width: 13px;
    height: 13px;
    margin: 0;
    accent-color: #3d94f6;
  }
`

const Workspace = styled.main`
  display: grid;
  grid-template-columns: 173px 418px 4px minmax(0, 1fr);
  flex: 1;
  min-height: 0;
`

const NavPanel = styled.aside`
  display: flex;
  flex-direction: column;
  min-height: 0;
  margin-left: -9px;
  border-right: 1px solid #c2c4c9;
  width: 182px;
  overflow: hidden;
`

const PanelGrip = styled.div`
  display: flex;
  flex: none;
  align-items: center;
  justify-content: flex-end;
  height: 12px;
  padding-right: 5px;
  border-bottom: 1px solid #c2c4c9;
  background: #d3d5da;
`

const CloseMark = () => (
  <svg width='6' height='6' viewBox='0 0 6 6' aria-hidden='true'>
    <path d='M0 0l6 6M6 0L0 6' stroke='#777' />
  </svg>
)

const NavTitle = styled.div`
  flex: none;
  height: 22px;
  padding: 3px 4px;
  border-bottom: 1px solid #c2c4c9;
  background: #eee;
  color: #777;
`

const NavTools = styled.div`
  display: flex;
  flex: none;
  align-items: center;
  justify-content: flex-end;
  gap: 4px;
  height: 28px;
  padding-right: 1px;
  border-bottom: 1px solid #c2c4c9;
  background: #eee;
`

const ViewButton = styled.button`
  display: flex;
  align-items: center;
  justify-content: center;
  width: 24px;
  height: 22px;
  border: 1px solid #58a6f8;
  border-radius: 3px;
  background: #e8f3ff;
`

const NavTree = styled.ul`
  position: relative;
  flex: 1;
  min-height: 0;
  padding-top: 3px;
  overflow: hidden;
`

const NavCategory = styled.li`
  height: 24px;
  padding: 4px 0;
`

const NavItem = styled.li`
  display: flex;
  align-items: center;
  gap: 6px;
  width: 140px;
  height: 21px;
  margin: 0 0 3px 22px;
  padding-left: 3px;
  background: ${p => (p.$selected ? '#c8d8ef' : 'none')};
  white-space: nowrap;
`

const ScrollThumb = styled.span`
  position: absolute;
  top: ${p => p.$top}px;
  right: 3px;
  width: 8px;
  height: ${p => p.$height}px;
  border-radius: 4px;
  background: #cbcbcb;
`

const MiddleColumn = styled.div`
  display: flex;
  flex-direction: column;
  gap: 4px;
  min-height: 0;
  padding-left: 4px;
`

const Panel = styled.section`
  display: flex;
  flex: ${p => (p.$grow ? '1' : '0 0 310px')};
  flex-direction: column;
  min-height: 0;
  border: 1px solid #b8babf;
  border-top-color: #d3d5da;
  overflow: hidden;
`

const PanelTabs = styled.div`
  display: flex;
  flex: none;
  height: 22px;
  border-bottom: 1px solid #c2c4c9;
  background: #eee;
`

const PanelTab = styled.button`
  width: 65px;
  border-right: 1px solid #c2c4c9;
  font-weight: ${p => (p.$active ? 700 : 400)};
  color: ${p => (p.$active ? '#333' : '#888')};
  background: ${p => (p.$active ? '#eee' : '#e0e0e0')};
`

const PanelTools = styled.div`
  display: flex;
  flex: none;
  align-items: center;
  gap: 9px;
  height: 28px;
  padding: 2px 5px 0;
  border-bottom: 1px solid #c2c4c9;
  background: #eee;
`

const PanelTool = styled.button`
  display: flex;
  align-items: center;
  gap: 3px;
  color: #333;
`

const MoreButton = styled.button`
  margin-left: auto;
`

const SearchRow = styled.div`
  display: flex;
  flex: none;
  align-items: center;
  height: 19px;
  padding-right: 4px;
  border-bottom: 1px solid #c2c4c9;
  input {
    flex: 1;
    min-width: 0;
    padding: 0 2px;
    border: 0;
  }
  input::placeholder {
    color: #888;
  }
`

const ComponentTree = styled.ul`
  padding-top: 3px;
`

const Node = styled.li`
  display: flex;
  align-items: center;
  gap: 9px;
  height: 24px;
  padding-left: ${p => 12 + p.$level * 25}px;
  mark {
    margin-left: 13px;
    padding: 2px 3px;
    background: #b0cbec;
  }
`

const Twisty = () => (
  <svg width='6' height='6' viewBox='0 0 6 6' aria-hidden='true'>
    <path d='M6 0v6H0z' fill='#444' />
  </svg>
)

const PropertyArea = styled.div`
  position: relative;
  flex: 1;
  min-height: 0;
  padding-right: 16px;
  overflow: hidden;
`

const PropertyTable = styled.table`
  width: 100%;
  border-collapse: collapse;
  table-layout: fixed;
  th, td {
    height: 21px;
    padding: 0;
    border-right: 1px solid #c9c9c9;
    border-bottom: 1px solid #d0d0d0;
    white-space: nowrap;
    line-height: 16px;
  }
  th {
    font-weight: 400;
    color: #333;
    background: #eee;
  }
  td {
    padding-left: 2px;
  }
  th.value {
    border: 1px solid #62a4ec;
    font-weight: 700;
    color: #fff;
    background: #80bbfb;
  }
`

const PropertyRow = styled.tr`
  td:nth-child(2) {
    color: ${p => (p.$kind === 'plain' ? '#000' : '#1a66ff')};
  }
  td:nth-child(3) {
    color: ${p => (p.$kind === 'locked' ? '#999' : '#222')};
    background: ${p => (p.$kind === 'locked' ? '#eaeaea' : '#fff')};
  }
`

const RebarSvg = styled.svg`
  fill: none;
  stroke: #000;
  vertical-align: -1px;
`

const Splitter = styled.div`
  padding-top: 122px;
  i {
    display: block;
    height: 100px;
    background: #5f6b77;
  }
`

const RightColumn = styled.div`
  display: flex;
  flex-direction: column;
  min-width: 0;
  min-height: 0;
`

const DrawingSvg = styled.svg`
  flex: 1;
  width: 100%;
  min-height: 0;
  background: #000;
`

const BottomSplitter = styled.div`
  flex: none;
  height: 4px;
  padding-left: 594px;
  i {
    display: block;
    width: 100px;
    height: 4px;
    background: #5f6b77;
  }
`

const SpanPanel = styled.section`
  flex: 0 0 370px;
  border-left: 1px solid #c2c4c9;
  overflow: hidden;
`

const SpanTitle = styled.div`
  height: 22px;
  padding: 3px 8px;
  border-bottom: 1px solid #c2c4c9;
  font-weight: 700;
  color: #888;
  background: #eee;
`

const SpanTools = styled.div`
  display: flex;
  gap: 8px;
  height: 28px;
  padding: 0 5px;
  background: #eee;
  button:disabled {
    color: #aaa;
  }
`

const SpanTable = styled.table`
  width: 979px;
  border-collapse: collapse;
  table-layout: fixed;
  th, td {
    padding: 0;
    border: 1px solid #c2c4c9;
    white-space: nowrap;
    line-height: 16px;
  }
  thead th {
    height: 17px;
    font-weight: 400;
    color: #333;
    background: #eee;
  }
  td {
    height: 21px;
    padding-left: 3px;
  }
  thead .current, .current {
    font-weight: 700;
    color: #fff;
    background: #80bbfb;
  }
`

const ActiveCell = styled.td`
  position: relative;
  && {
    border: 2px solid #6aa7e8;
  }
  &::after {
    content: '';
    position: absolute;
    right: -3px;
    bottom: -3px;
    width: 4px;
    height: 4px;
    background: #6aa7e8;
  }
  div {
    display: flex;
    align-items: center;
    gap: 6px;
  }
  button {
    display: flex;
    align-items: center;
    justify-content: center;
    width: 16px;
    height: 12px;
    border: 1px solid #6aa7e8;
    border-radius: 2px;
    background: #e8f3ff;
  }
`

const Dialog = styled.section`
  position: absolute;
  top: 323px;
  left: 686px;
  width: 454px;
  border: 1px solid #b8c2d4;
  border-top: 0;
  background: #efefef;
`

const DialogTitle = styled.header`
  display: flex;
  align-items: center;
  justify-content: space-between;
  height: 27px;
  margin: 0 -1px;
  padding: 0 10px 0 9px;
  color: #fff;
  background: #2b80e2;
`

const DialogBody = styled.div`
  padding: 13px;
`

const Field = styled.div`
  display: flex;
  align-items: center;
  gap: 7px;
  input {
    flex: 1;
    min-width: 0;
    height: 26px;
    padding: 0 2px;
    border: 1px solid #c4c6ca;
    color: #333;
  }
`

const FormatLabel = styled.div`
  margin: 15px 0 7px;
`

const Formats = styled.div`
  display: flex;
  gap: 7px;
  height: 202px;
`

const FormatList = styled.ul`
  flex: none;
  width: 255px;
  padding: 2px 1px;
  border: 1px solid #ababab;
  background: #fff;
`

const FormatItem = styled.li`
  height: 20px;
  margin-bottom: 2px;
  padding: 2px;
  background: ${p => (p.$selected ? '#b0cbec' : 'none')};
`

const Note = styled.p`
  flex: 1;
  margin: 0;
  padding: 4px;
  border: 1px solid #dcdce4;
  border-top-color: #ababab;
  line-height: 17px;
  background: #ffffcd;
`

const DialogFooter = styled.footer`
  display: flex;
  align-items: center;
  gap: 7px;
  padding-top: 7px;
  span {
    flex: 1;
  }
`

const DialogButton = styled.button`
  width: 80px;
  height: 26px;
  border: 1px solid ${p => (p.$primary ? '#2b80e2' : '#c8c8c8')};
  border-radius: 3px;
  color: ${p => (p.$primary ? '#fff' : '#000')};
  background: ${p => (p.$primary ? '#2b80e2' : '#fff')};
`

const Markup = styled.svg`
  position: absolute;
  top: 0;
  left: -1px;
  overflow: visible;
  pointer-events: none;
  fill: none;
  stroke: #fb3a37;
  stroke-width: 8;
  stroke-linecap: round;
  stroke-linejoin: round;
`

export default App
